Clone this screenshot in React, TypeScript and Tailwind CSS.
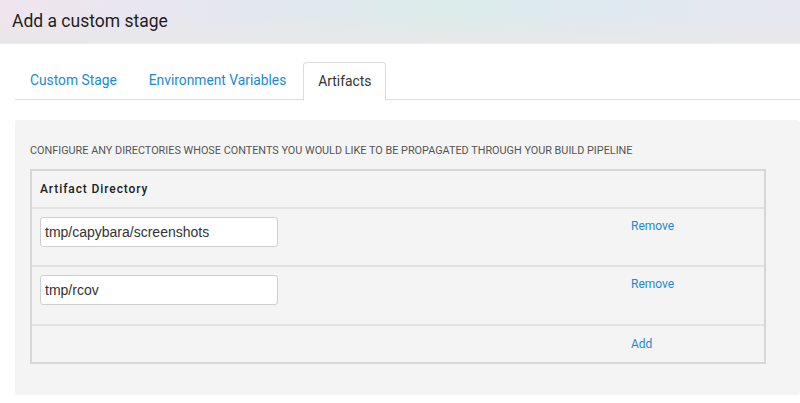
import React from 'react';

const tabs = ['Custom Stage', 'Environment Variables', 'Artifacts'];
const artifacts = ['tmp/capybara/screenshots', 'tmp/rcov'];

export default function App() {
  const active = 'Artifacts';
  return (
    <div className="w-[800px] h-[403px] overflow-hidden bg-white font-['Roboto',sans-serif]">
      {/* title bar */}
      <div className="h-[44px] flex items-center px-3 border-b border-[#ececec] bg-[linear-gradient(to_bottom,rgba(232,232,232,0)_30%,#e8e8e8),linear-gradient(to_right,#f0e5ee,#e4e7f0_30%,#dbecea_55%,#dfe9f0_75%,#e7e7f1)]">
        <h1 className="text-[17.5px] text-[#1e1e1e] leading-none">Add a custom stage</h1>
      </div>

      {/* tabs */}
      <div className="mt-[18px] ml-[15px] flex gap-[2px] border-b border-[#dcdcdc] h-[38px]">
        {tabs.map((t) =>
          t === active ? (
            <div
              key={t}
              className="px-[14px] flex items-center text-[13.8px] text-[#333] bg-white border border-[#dcdcdc] border-b-transparent rounded-t-[4px] -mb-[1px] h-[39px]"
            >
              {t}
            </div>
          ) : (
            <div key={t} className="px-[15px] flex items-center text-[13.8px] text-[#1a8ad4]">
              {t}
            </div>
          )
        )}
      </div>

      {/* panel */}
      <div className="mt-[20px] ml-[15px] bg-[#f4f4f4] rounded-[3px] h-[275px] pl-[15px] pt-[25px]">
        <p className="text-[10.85px] text-[#555] uppercase leading-[12px]">
          Configure any directories whose contents you would like to be propagated through your build pipeline
        </p>

        <div className="mt-[12px] w-[736px] border-2 border-[#d6d6d6]">
          <div className="h-[36px] flex items-center pl-[8px] text-[12px] font-medium tracking-[0.9px] text-[#222]">
            Artifact Directory
          </div>
          {artifacts.map((a, i) => (
            <div key={a} className={i === 0 ? 'h-[58px] border-t-2 border-[#e2e2e2] flex' : 'h-[59px] border-t-2 border-[#e2e2e2] flex'}>
              <div className="w-[599px] pl-[8px] pt-[8px]">
                <input
                  readOnly
                  value={a}
                  className="w-[238px] h-[30px] px-[4px] bg-white border border-[#cfcfcf] rounded-[3px] text-[14px] text-[#333] font-['Liberation_Sans',Arial,sans-serif] outline-none"
                />
              </div>
              <div className="pt-[4px]">
                <a className="text-[12px] text-[#1a8ad4] cursor-pointer">Remove</a>
              </div>
            </div>
          ))}
          <div className="h-[38px] border-t-2 border-[#e2e2e2] flex items-center">
            <div className="w-[599px]" />
            <a className="text-[12px] text-[#1a8ad4] cursor-pointer">Add</a>
          </div>
        </div>
      </div>
    </div>
  );
}
